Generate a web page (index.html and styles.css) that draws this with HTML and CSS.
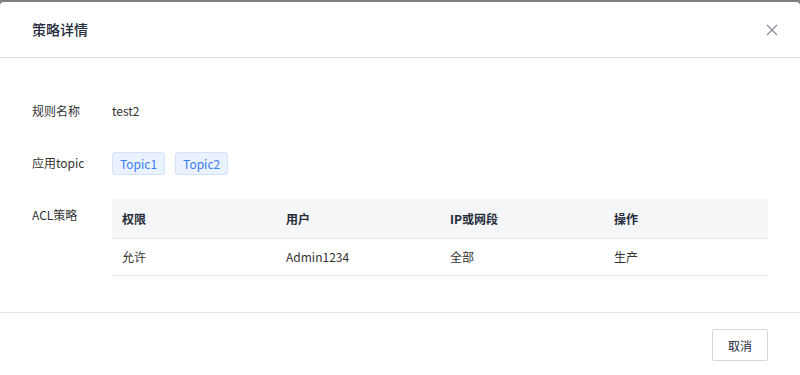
FILE: index.html
```html
<!DOCTYPE html>
<html lang="zh">
<head>
<meta charset="utf-8">
<title>策略详情</title>
<link rel="stylesheet" href="styles.css">
</head>
<body>
<div class="dialog">
  <div class="dialog-header">
    <span class="dialog-title">策略详情</span>
    <button class="close" aria-label="close">
      <svg width="12" height="12" viewBox="0 0 12 12"><path d="M1 1L11 11M11 1L1 11" stroke="#8a8e99" stroke-width="1.2" fill="none"/></svg>
    </button>
  </div>
  <div class="dialog-body">
    <div class="field field-name">
      <div class="label">规则名称</div>
      <div class="value">test2</div>
    </div>
    <div class="field field-topic">
      <div class="label">应用topic</div>
      <div class="value tags"><span class="tag">Topic1</span><span class="tag">Topic2</span></div>
    </div>
    <div class="field field-table">
      <div class="label">ACL策略</div>
      <div class="value">
        <table class="acl">
          <thead><tr><th>权限</th><th>用户</th><th>IP或网段</th><th>操作</th></tr></thead>
          <tbody><tr><td>允许</td><td>Admin1234</td><td>全部</td><td>生产</td></tr></tbody>
        </table>
      </div>
    </div>
  </div>
  <div class="dialog-footer">
    <button class="btn">取消</button>
  </div>
</div>
</body>
</html>
```
FILE: styles.css
```css
html, body { margin: 0; padding: 0; }
body {
  background: #7f7f7f;
  font-family: "Noto Sans CJK SC", "Noto Sans", sans-serif;
  color: #333;
  width: 800px;
  height: 375px;
  overflow: hidden;
}
.dialog {
  margin-top: 2px;
  background: #fff;
  border-radius: 4px 4px 0 0;
  height: 373px;
  display: flex;
  flex-direction: column;
}
.dialog-header {
  height: 55px;
  border-bottom: 1px solid #e4e4ec;
  display: flex;
  align-items: center;
  justify-content: space-between;
  padding: 0 20px 0 32px;
}
.dialog-title {
  font-size: 14px;
  font-weight: 500;
  color: #252b3a;
  line-height: 20px;
  margin-top: -1px;
}
.close {
  border: none;
  background: none;
  padding: 0;
  width: 12px;
  height: 12px;
  display: flex;
  margin-right: 2px;
}
.dialog-body {
  padding: 41px 32px 0 32px;
  height: 255px;
  box-sizing: border-box;
  border-bottom: 1px solid #e4e4ec;
  font-size: 12px;
}
.field {
  display: flex;
  align-items: center;
  min-height: 24px;
}
.field-name { margin-bottom: 28px; }
.field-topic { margin-bottom: 24px; }
.field-table { align-items: flex-start; }
.label {
  width: 80px;
  flex: none;
  color: #333;
  line-height: 18px;
}
.field-table .label { margin-top: 7px; }
.value { flex: 1; color: #333; line-height: 18px; }
.tags { display: flex; gap: 10px; }
.tag {
  display: inline-block;
  height: 23px;
  line-height: 21px;
  box-sizing: border-box;
  padding: 0 7px;
  border: 1px solid #d3e2fd;
  background: #ebf2ff;
  color: #3b7cf3;
  border-radius: 3px;
}
.acl {
  width: 656px;
  border-collapse: collapse;
  table-layout: fixed;
  font-size: 12px;
}
.acl th, .acl td {
  text-align: left;
  padding: 0 10px;
  border-bottom: 1px solid #e4e4ec;
}
.acl th {
  height: 39px;
  background: #f5f6f8;
  font-weight: 600;
  color: #252b3a;
}
.acl td { height: 36px; color: #333; }
.dialog-footer {
  display: flex;
  justify-content: flex-end;
  padding: 16px 32px 0 0;
}
.btn {
  width: 56px;
  height: 32px;
  background: #fff;
  border: 1px solid #d7d8da;
  border-radius: 2px;
  font-family: inherit;
  font-size: 12px;
  color: #252b3a;
  padding: 0;
}
```
